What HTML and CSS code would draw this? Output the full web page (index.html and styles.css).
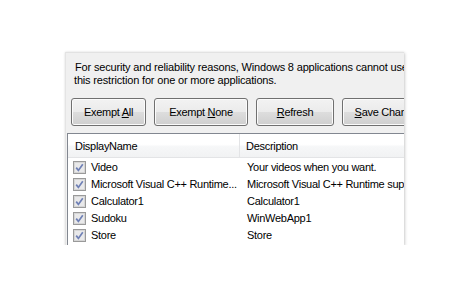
FILE: index.html
```html
<!DOCTYPE html>
<html>
<head>
<meta charset="utf-8">
<link rel="stylesheet" href="styles.css">
</head>
<body>
<div class="panel">
  <div class="intro">
    <div class="line">For security and reliability reasons, Windows 8 applications cannot use network loopback. You can exempt</div>
    <div class="line line2">this restriction for one or more applications.</div>
  </div>
  <div class="buttons">
    <div class="btn b1">Exempt <u>A</u>ll</div>
    <div class="btn b2">Exempt <u>N</u>one</div>
    <div class="btn b3"><u>R</u>efresh</div>
    <div class="btn b4"><u>S</u>ave Changes</div>
  </div>
  <div class="list">
    <div class="header">
      <div class="hcell c1">DisplayName</div>
      <div class="hcell c2">Description</div>
    </div>
    <div class="rows">
      <div class="row">
        <div class="cell c1"><svg class="chk" width="13" height="13" viewBox="0 0 13 13"><rect x="0.5" y="0.5" width="12" height="12" fill="#f4f4f4" stroke="#9a9a9a"/><rect x="1.5" y="1.5" width="10" height="10" fill="#e9e9ea" stroke="#d6d6d6"/><path d="M3.2 6.6 L5.4 9.4 L9.8 3.2" fill="none" stroke="#6f80b5" stroke-width="1.7"/></svg><span>Video</span></div>
        <div class="cell c2">Your videos when you want.</div>
      </div>
      <div class="row">
        <div class="cell c1"><svg class="chk" width="13" height="13" viewBox="0 0 13 13"><rect x="0.5" y="0.5" width="12" height="12" fill="#f4f4f4" stroke="#9a9a9a"/><rect x="1.5" y="1.5" width="10" height="10" fill="#e9e9ea" stroke="#d6d6d6"/><path d="M3.2 6.6 L5.4 9.4 L9.8 3.2" fill="none" stroke="#6f80b5" stroke-width="1.7"/></svg><span>Microsoft Visual C++ Runtime...</span></div>
        <div class="cell c2">Microsoft Visual C++ Runtime support</div>
      </div>
      <div class="row">
        <div class="cell c1"><svg class="chk" width="13" height="13" viewBox="0 0 13 13"><rect x="0.5" y="0.5" width="12" height="12" fill="#f4f4f4" stroke="#9a9a9a"/><rect x="1.5" y="1.5" width="10" height="10" fill="#e9e9ea" stroke="#d6d6d6"/><path d="M3.2 6.6 L5.4 9.4 L9.8 3.2" fill="none" stroke="#6f80b5" stroke-width="1.7"/></svg><span>Calculator1</span></div>
        <div class="cell c2">Calculator1</div>
      </div>
      <div class="row">
        <div class="cell c1"><svg class="chk" width="13" height="13" viewBox="0 0 13 13"><rect x="0.5" y="0.5" width="12" height="12" fill="#f4f4f4" stroke="#9a9a9a"/><rect x="1.5" y="1.5" width="10" height="10" fill="#e9e9ea" stroke="#d6d6d6"/><path d="M3.2 6.6 L5.4 9.4 L9.8 3.2" fill="none" stroke="#6f80b5" stroke-width="1.7"/></svg><span>Sudoku</span></div>
        <div class="cell c2">WinWebApp1</div>
      </div>
      <div class="row">
        <div class="cell c1"><svg class="chk" width="13" height="13" viewBox="0 0 13 13"><rect x="0.5" y="0.5" width="12" height="12" fill="#f4f4f4" stroke="#9a9a9a"/><rect x="1.5" y="1.5" width="10" height="10" fill="#e9e9ea" stroke="#d6d6d6"/><path d="M3.2 6.6 L5.4 9.4 L9.8 3.2" fill="none" stroke="#6f80b5" stroke-width="1.7"/></svg><span>Store</span></div>
        <div class="cell c2">Store</div>
      </div>
    </div>
  </div>
</div>
</body>
</html>
```

FILE: styles.css
```css
html, body {
  margin: 0;
  padding: 0;
  background: #ffffff;
}
body {
  font-family: "Liberation Sans", Arial, sans-serif;
  font-size: 11px;
  color: #000;
  letter-spacing: -0.28px;
}
.panel {
  margin: 52px 0 0 65px;
  width: 339px;
  height: 193px;
  background: #f0f0f0;
  border-top: 1px solid #e2e2e2;
  border-left: 1px solid #e4e4e4;
  box-shadow: 1px 1px 3px rgba(0,0,0,0.18), 0 0 2px rgba(0,0,0,0.08);
  overflow: hidden;
  box-sizing: border-box;
}
.intro {
  padding: 8px 0 0 9px;
  line-height: 13px;
  white-space: nowrap;
  letter-spacing: -0.17px;
}
.line2 {
  margin-left: -1px;
}
.buttons {
  display: flex;
  gap: 8px;
  margin: 11px 0 0 5px;
  white-space: nowrap;
}
.btn {
  flex: none;
  height: 26px;
  line-height: 26px;
  text-align: center;
  border: 1px solid #707070;
  border-radius: 3px;
  box-shadow: inset 0 0 0 1px #fbfbfb;
  background: linear-gradient(to bottom, #f2f2f2 0%, #ebebeb 50%, #dddddd 51%, #cfcfcf 100%);
}
.b1 { width: 73px; }
.b2 { width: 92px; }
.b3 { width: 76px; }
.b4 { width: 92px; }
.list {
  margin: 7px 0 0 1px;
  background: #fff;
  border-top: 1px solid #828790;
  border-left: 1px solid #828790;
  height: 120px;
}
.header {
  display: grid;
  grid-template-columns: 172px 1fr;
  height: 23px;
  background: linear-gradient(to bottom, #ffffff 0%, #ffffff 45%, #f6f7f8 55%, #f1f2f3 100%);
  border-bottom: 1px solid #e3e4e6;
}
.hcell {
  padding-top: 2px;
  line-height: 21px;
  white-space: nowrap;
}
.hcell.c1 {
  padding-left: 7px;
  border-right: 1px solid #e3e4e6;
}
.hcell.c2 {
  padding-left: 6px;
}
.rows {
  padding-top: 1px;
}
.row {
  display: grid;
  grid-template-columns: 172px 1fr;
  height: 17px;
  line-height: 17px;
  white-space: nowrap;
}
.cell.c1 {
  display: flex;
  align-items: center;
  padding-left: 5px;
  gap: 5px;
}
.cell.c2 {
  padding-left: 7px;
}
.chk {
  flex: none;
  display: block;
}
```
